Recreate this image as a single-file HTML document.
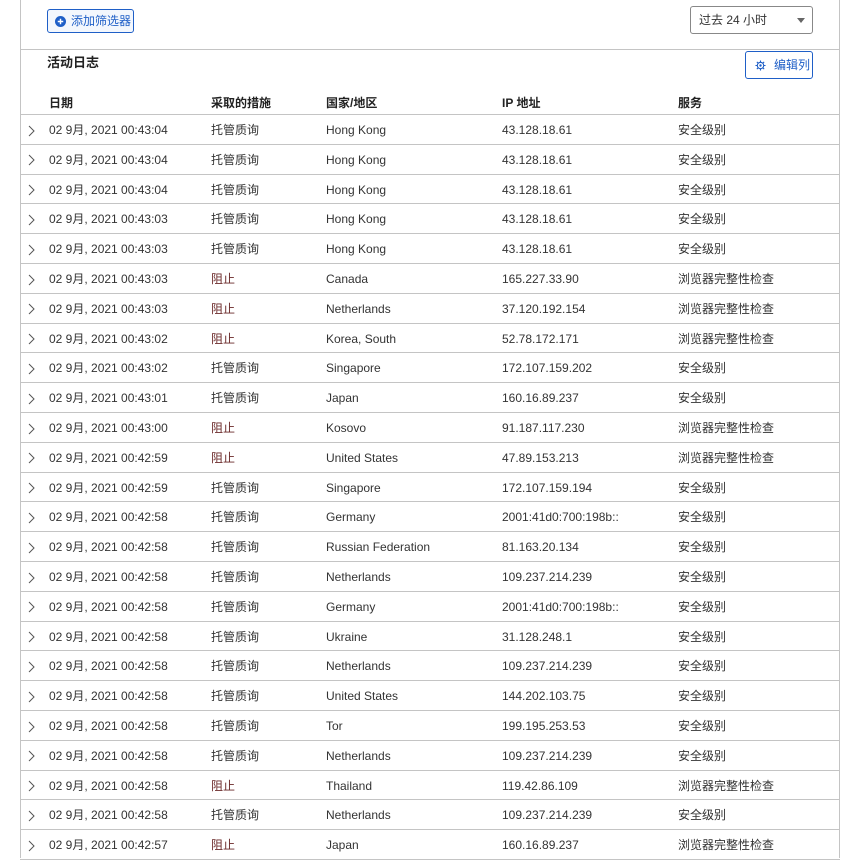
<!DOCTYPE html>
<html><head><meta charset="utf-8"><style>
*{margin:0;padding:0;box-sizing:border-box}
body{width:866px;height:858px;background:#fff;font-family:"Liberation Sans","Noto Sans CJK SC",sans-serif;font-size:12px;color:#333;position:relative;overflow:hidden}
.vl{position:absolute;top:0;bottom:0;width:1px;background:#c4c4c4}
.hl{position:absolute;left:20px;width:820px;height:1px;background:#c4c4c4}
.btn{position:absolute;border:1px solid #1f5fc7;border-radius:3px;color:#1f5fc7;background:#fff;font-size:12px;display:flex;align-items:center;line-height:14px}
.sel{position:absolute;left:690px;top:6px;width:123px;height:28px;border:1px solid #888;border-radius:3px;padding-left:8px;line-height:26px;font-size:12px;color:#333}
.sel:after{content:"";position:absolute;right:7px;top:11px;border-left:4px solid transparent;border-right:4px solid transparent;border-top:5px solid #666}
.title{position:absolute;left:47px;top:54px;font-weight:bold;font-size:13px;color:#222;line-height:18px}
.row{position:absolute;left:20px;width:820px;border-bottom:1px solid #c4c4c4}
.row span{position:absolute;top:1px;white-space:nowrap;line-height:29px;height:29px}
.h span{font-weight:bold;color:#222}
.c0{left:7px;display:flex;align-items:center}
.c1{left:29px}.c2{left:191px}.c3{left:306px}.c4{left:482px}.c5{left:658px}
.red{color:#6a2828}
</style></head><body>
<div class="vl" style="left:20px"></div><div class="vl" style="left:839px"></div>
<div class="btn" style="left:47px;top:9px;width:87px;height:24px;padding-left:7px;background:#f3f7fd"><svg width="11" height="11" viewBox="0 0 12 12"><circle cx="6" cy="6" r="6" fill="#1f5fc7"/><path d="M3 6h6M6 3v6" stroke="#fff" stroke-width="1.6"/></svg><span style="margin-left:5px">添加筛选器</span></div>
<div class="sel">过去 24 小时</div>
<div class="hl" style="top:49px"></div>
<div class="title">活动日志</div>
<div class="btn" style="left:745px;top:51px;width:68px;height:28px;padding-left:9px"><svg width="11" height="11" viewBox="0 0 12 12"><circle cx="6" cy="6" r="3.5" fill="none" stroke="#1f5fc7" stroke-width="1.2"/><circle cx="6" cy="6" r="1.3" fill="#1f5fc7"/><path d="M6 0.5v2M6 9.5v2M0.5 6h2M9.5 6h2M2 2l1.5 1.5M8.5 8.5L10 10M2 10l1.5-1.5M8.5 3.5L10 2" stroke="#1f5fc7" stroke-width="1.2"/></svg><span style="margin-left:8px">编辑列</span></div>
<div class="row h" style="top:88px;height:27px"><span class="c1">日期</span><span class="c2">采取的措施</span><span class="c3">国家/地区</span><span class="c4">IP 地址</span><span class="c5">服务</span></div>
<div id="rows"></div>
<script>
var d=[
["00:43:04",0,"Hong Kong","43.128.18.61"],
["00:43:04",0,"Hong Kong","43.128.18.61"],
["00:43:04",0,"Hong Kong","43.128.18.61"],
["00:43:03",0,"Hong Kong","43.128.18.61"],
["00:43:03",0,"Hong Kong","43.128.18.61"],
["00:43:03",1,"Canada","165.227.33.90"],
["00:43:03",1,"Netherlands","37.120.192.154"],
["00:43:02",1,"Korea, South","52.78.172.171"],
["00:43:02",0,"Singapore","172.107.159.202"],
["00:43:01",0,"Japan","160.16.89.237"],
["00:43:00",1,"Kosovo","91.187.117.230"],
["00:42:59",1,"United States","47.89.153.213"],
["00:42:59",0,"Singapore","172.107.159.194"],
["00:42:58",0,"Germany","2001:41d0:700:198b::"],
["00:42:58",0,"Russian Federation","81.163.20.134"],
["00:42:58",0,"Netherlands","109.237.214.239"],
["00:42:58",0,"Germany","2001:41d0:700:198b::"],
["00:42:58",0,"Ukraine","31.128.248.1"],
["00:42:58",0,"Netherlands","109.237.214.239"],
["00:42:58",0,"United States","144.202.103.75"],
["00:42:58",0,"Tor","199.195.253.53"],
["00:42:58",0,"Netherlands","109.237.214.239"],
["00:42:58",1,"Thailand","119.42.86.109"],
["00:42:58",0,"Netherlands","109.237.214.239"],
["00:42:57",1,"Japan","160.16.89.237"]];
var h="";
d.forEach(function(r,i){var t=115+i*29.8;
h+='<div class="row" style="top:'+t+'px;height:29.8px"><span class="c0"><svg width="8" height="12" viewBox="0 0 8 12"><path d="M2 1l5 5-5 5" fill="none" stroke="#555" stroke-width="1"/></svg></span><span class="c1">02 9月, 2021 '+r[0]+'</span><span class="c2'+(r[1]?' red':'')+'">'+(r[1]?'阻止':'托管质询')+'</span><span class="c3">'+r[2]+'</span><span class="c4">'+r[3]+'</span><span class="c5">'+(r[1]?'浏览器完整性检查':'安全级别')+'</span></div>';});
document.getElementById("rows").innerHTML=h;
</script>
</body></html>
